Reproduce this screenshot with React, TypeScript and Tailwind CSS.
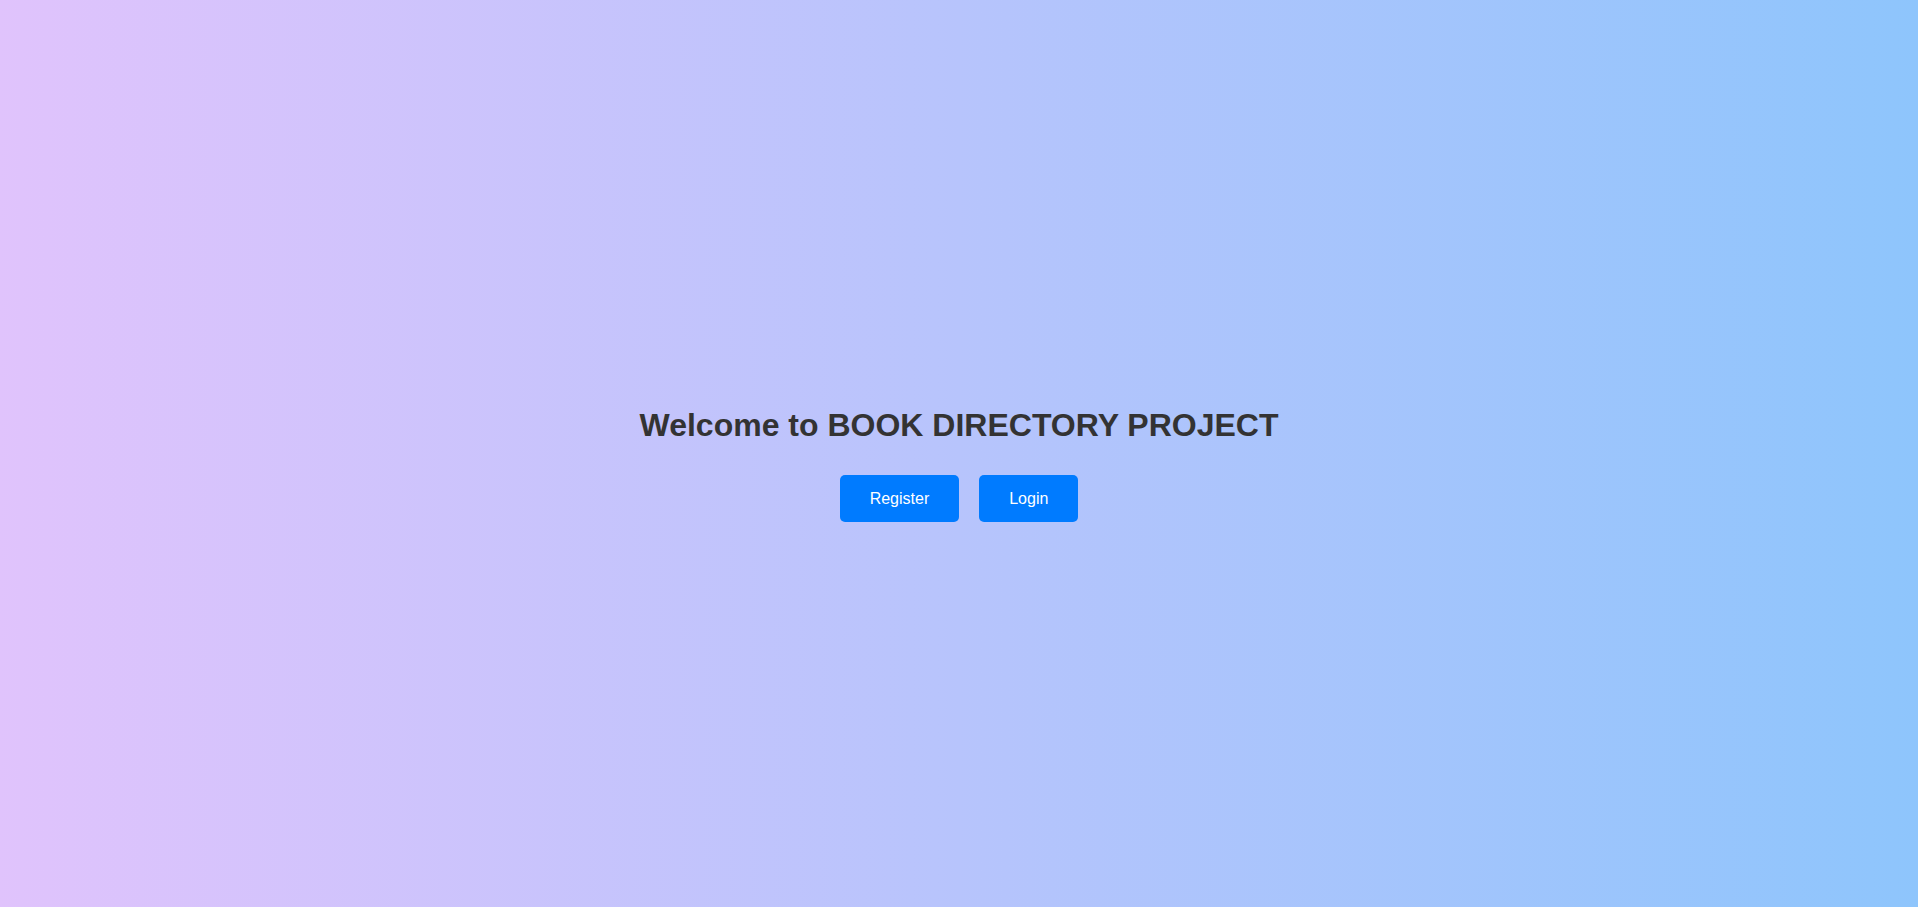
const App = () => {
  return (
    <div className="flex h-screen w-full flex-col items-center justify-center bg-[linear-gradient(to_right,#e0c3fc,#8ec5fc)] font-['Liberation_Sans',Arial,sans-serif] text-[#333]">
      <h1 className="my-[21px] text-[32px] font-bold leading-[37px]">
        Welcome to BOOK DIRECTORY PROJECT
      </h1>
      <div className="mt-[10px] flex gap-5">
        <button className="rounded-[5px] bg-[#007bff] px-[30px] py-[14px] text-base leading-[19px] text-white">
          Register
        </button>
        <button className="rounded-[5px] bg-[#007bff] px-[30px] py-[14px] text-base leading-[19px] text-white">
          Login
        </button>
      </div>
    </div>
  );
};

export default App;
